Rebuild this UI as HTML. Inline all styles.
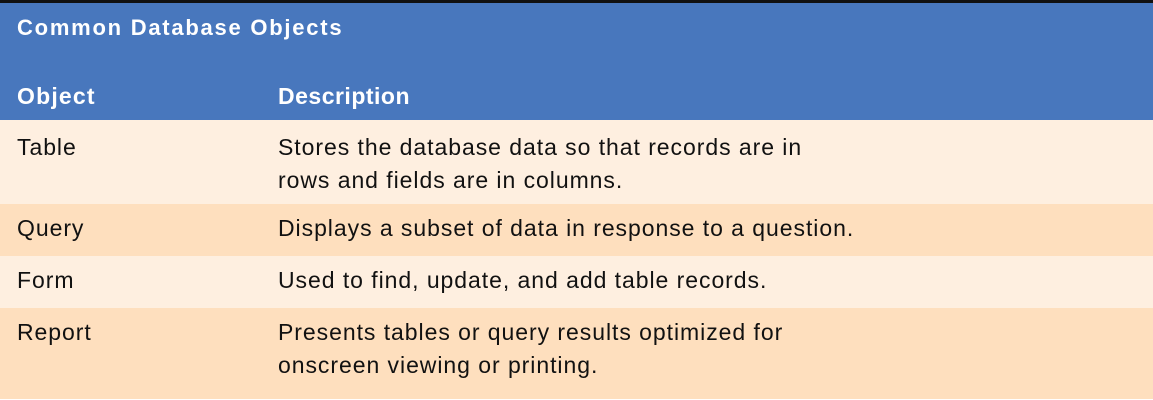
<!DOCTYPE html>
<html><head><style>
body{margin:0;width:1153px;height:400px;overflow:hidden;background:#fff;font-family:"Liberation Sans",Arial,sans-serif;}
.top{position:absolute;left:0;top:0;width:1153px;height:3px;background:#111;}
.blue{position:absolute;left:0;top:3px;width:1153px;height:117px;background:#4877bd;color:#fff;font-weight:bold;}
.r{position:absolute;left:0;width:1153px;font-size:23px;letter-spacing:0.95px;color:#111;}
.t{position:absolute;white-space:nowrap;line-height:33px;}
</style></head><body>
<div class="top"></div>
<div class="blue">
<div class="t" style="left:17px;top:8px;font-size:22px;letter-spacing:1.75px;">Common Database Objects</div>
<div class="t" style="left:17px;top:77px;font-size:23px;letter-spacing:1.2px;">Object</div>
<div class="t" style="left:278px;top:77px;font-size:23px;letter-spacing:0.5px;">Description</div>
</div>
<div class="r" style="top:120px;height:84px;background:#feefe0;">
<div class="t" style="left:17px;top:11px;">Table</div>
<div class="t" style="left:278px;top:11px;">Stores the database data so that records are in<br>rows and fields are in columns.</div>
</div>
<div class="r" style="top:204px;height:52px;background:#fedfbe;">
<div class="t" style="left:17px;top:8px;">Query</div>
<div class="t" style="left:278px;top:8px;">Displays a subset of data in response to a question.</div>
</div>
<div class="r" style="top:256px;height:52px;background:#feefe0;">
<div class="t" style="left:17px;top:8px;">Form</div>
<div class="t" style="left:278px;top:8px;">Used to find, update, and add table records.</div>
</div>
<div class="r" style="top:308px;height:91px;background:#fedfbe;">
<div class="t" style="left:17px;top:8px;">Report</div>
<div class="t" style="left:278px;top:8px;">Presents tables or query results optimized for<br>onscreen viewing or printing.</div>
</div>
</body></html>
